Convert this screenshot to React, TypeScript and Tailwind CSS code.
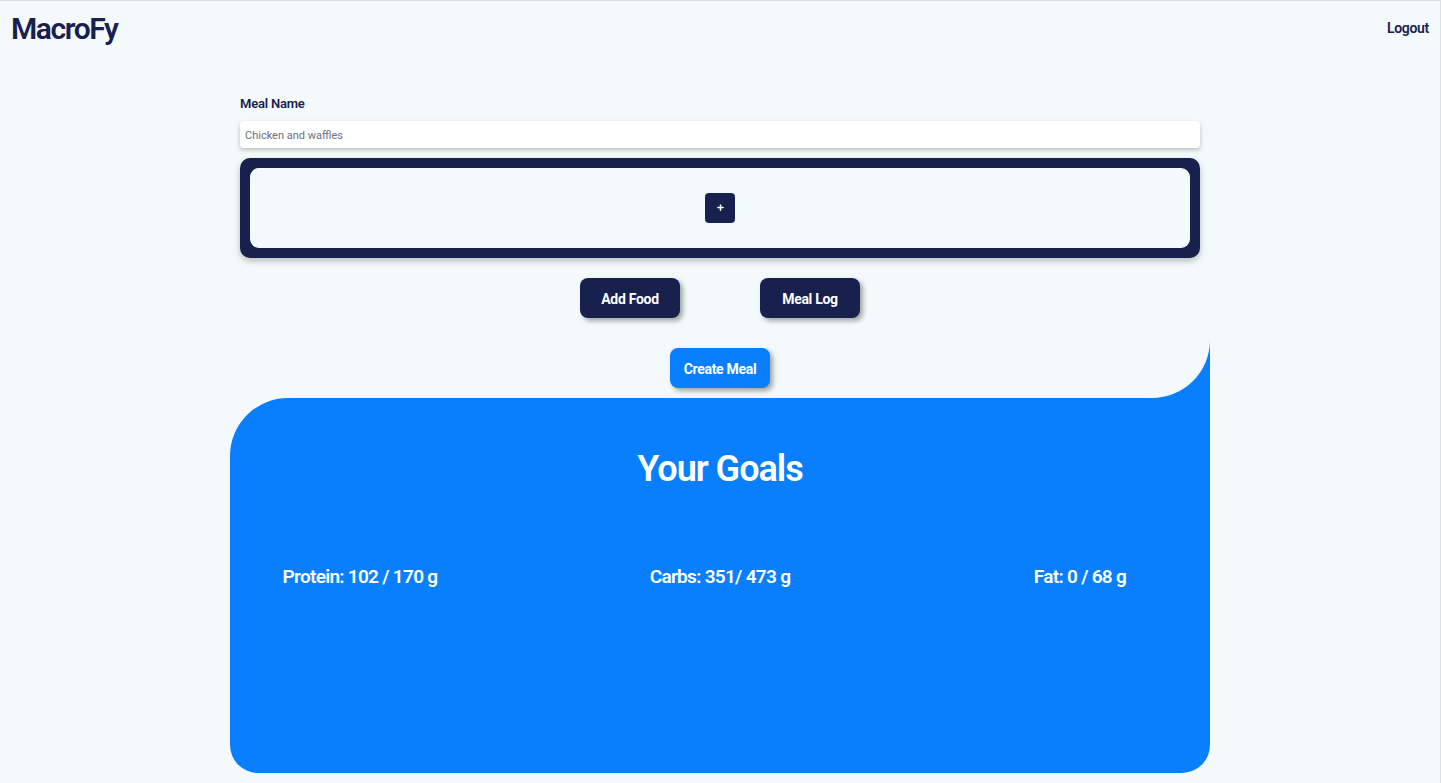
import { Plus } from 'lucide-react';

const goals = [
  { label: 'Protein', value: '102 / 170 g' },
  { label: 'Carbs', value: '351/ 473 g' },
  { label: 'Fat', value: '0 / 68 g' }
];

export default function App() {
  return (
    <div
      className="min-h-[783px] bg-[#f4fafb] border-t border-r border-[#dde2e5] text-[#18214d] flex flex-col"
      style={{ fontFamily: "Roboto, 'Liberation Sans', sans-serif" }}
    >
      {/* Navbar */}
      <header className="flex items-center justify-between h-[55px] pl-[11px] pr-[11px]">
        <div className="text-[30px] font-semibold tracking-[-1.4px] leading-none">MacroFy</div>
        <button className="text-[14px] font-semibold tracking-[-0.3px]">Logout</button>
      </header>

      {/* Meal form */}
      <main className="w-[960px] mx-auto flex flex-col pt-[38px]">
        <label className="text-[13px] font-semibold tracking-[-0.2px] mb-[7px]">Meal Name</label>
        <input
          className="h-[27px] bg-white rounded-[4px] px-[5px] pt-[2px] text-[11px] text-[#555b6e] placeholder:text-[#6b7080] shadow-[0_2px_4px_rgba(0,0,0,0.25)] outline-none"
          placeholder="Chicken and waffles"
        />

        <div className="mt-[10px] bg-[#18214d] rounded-[10px] p-[10px] shadow-[0_3px_6px_rgba(0,0,0,0.25)]">
          <div className="h-[80px] bg-[#f4fafb] rounded-[9px] flex items-center justify-center">
            <button className="w-[30px] h-[30px] rounded-[4px] bg-[#18214d] flex items-center justify-center text-white">
              <Plus size={9} strokeWidth={4} />
            </button>
          </div>
        </div>

        <div className="flex justify-center gap-[80px] mt-[20px]">
          <button className="w-[100px] h-[40px] pt-[4px] rounded-[8px] bg-[#18214d] text-white text-[14px] font-bold tracking-[-0.3px] shadow-[3px_3px_5px_rgba(0,0,0,0.35)]">
            Add Food
          </button>
          <button className="w-[100px] h-[40px] pt-[4px] rounded-[8px] bg-[#18214d] text-white text-[14px] font-bold tracking-[-0.3px] shadow-[3px_3px_5px_rgba(0,0,0,0.35)]">
            Meal Log
          </button>
        </div>

        <div className="flex justify-center mt-[30px]">
          <button className="w-[100px] h-[40px] pt-[4px] rounded-[8px] bg-[#0a7ffe] text-white text-[14px] font-bold tracking-[-0.3px] shadow-[3px_3px_5px_rgba(0,0,0,0.35)]">
            Create Meal
          </button>
        </div>
      </main>

      {/* Goals panel */}
      <section className="relative w-[980px] h-[375px] mx-auto mt-[10px] bg-[#0a7ffe] rounded-tl-[58px] rounded-tr-none rounded-b-[28px] text-white flex flex-col items-center">
        {/* inverted corner */}
        <div className="absolute right-0 -top-[58px] w-[58px] h-[58px] bg-[#0a7ffe]">
          <div className="w-full h-full bg-[#f4fafb] rounded-br-[58px]" />
        </div>
        <h2 className="mt-[44px] text-[36px] font-semibold tracking-[-1px]">Your Goals</h2>
        <div className="flex justify-center mt-[67px]">
          {goals.map((g) => (
            <div key={g.label} className="w-[360px] shrink-0 text-center text-[19px] font-semibold tracking-[-0.7px]">
              {g.label}: {g.value}
            </div>
          ))}
        </div>
      </section>
    </div>
  );
}
